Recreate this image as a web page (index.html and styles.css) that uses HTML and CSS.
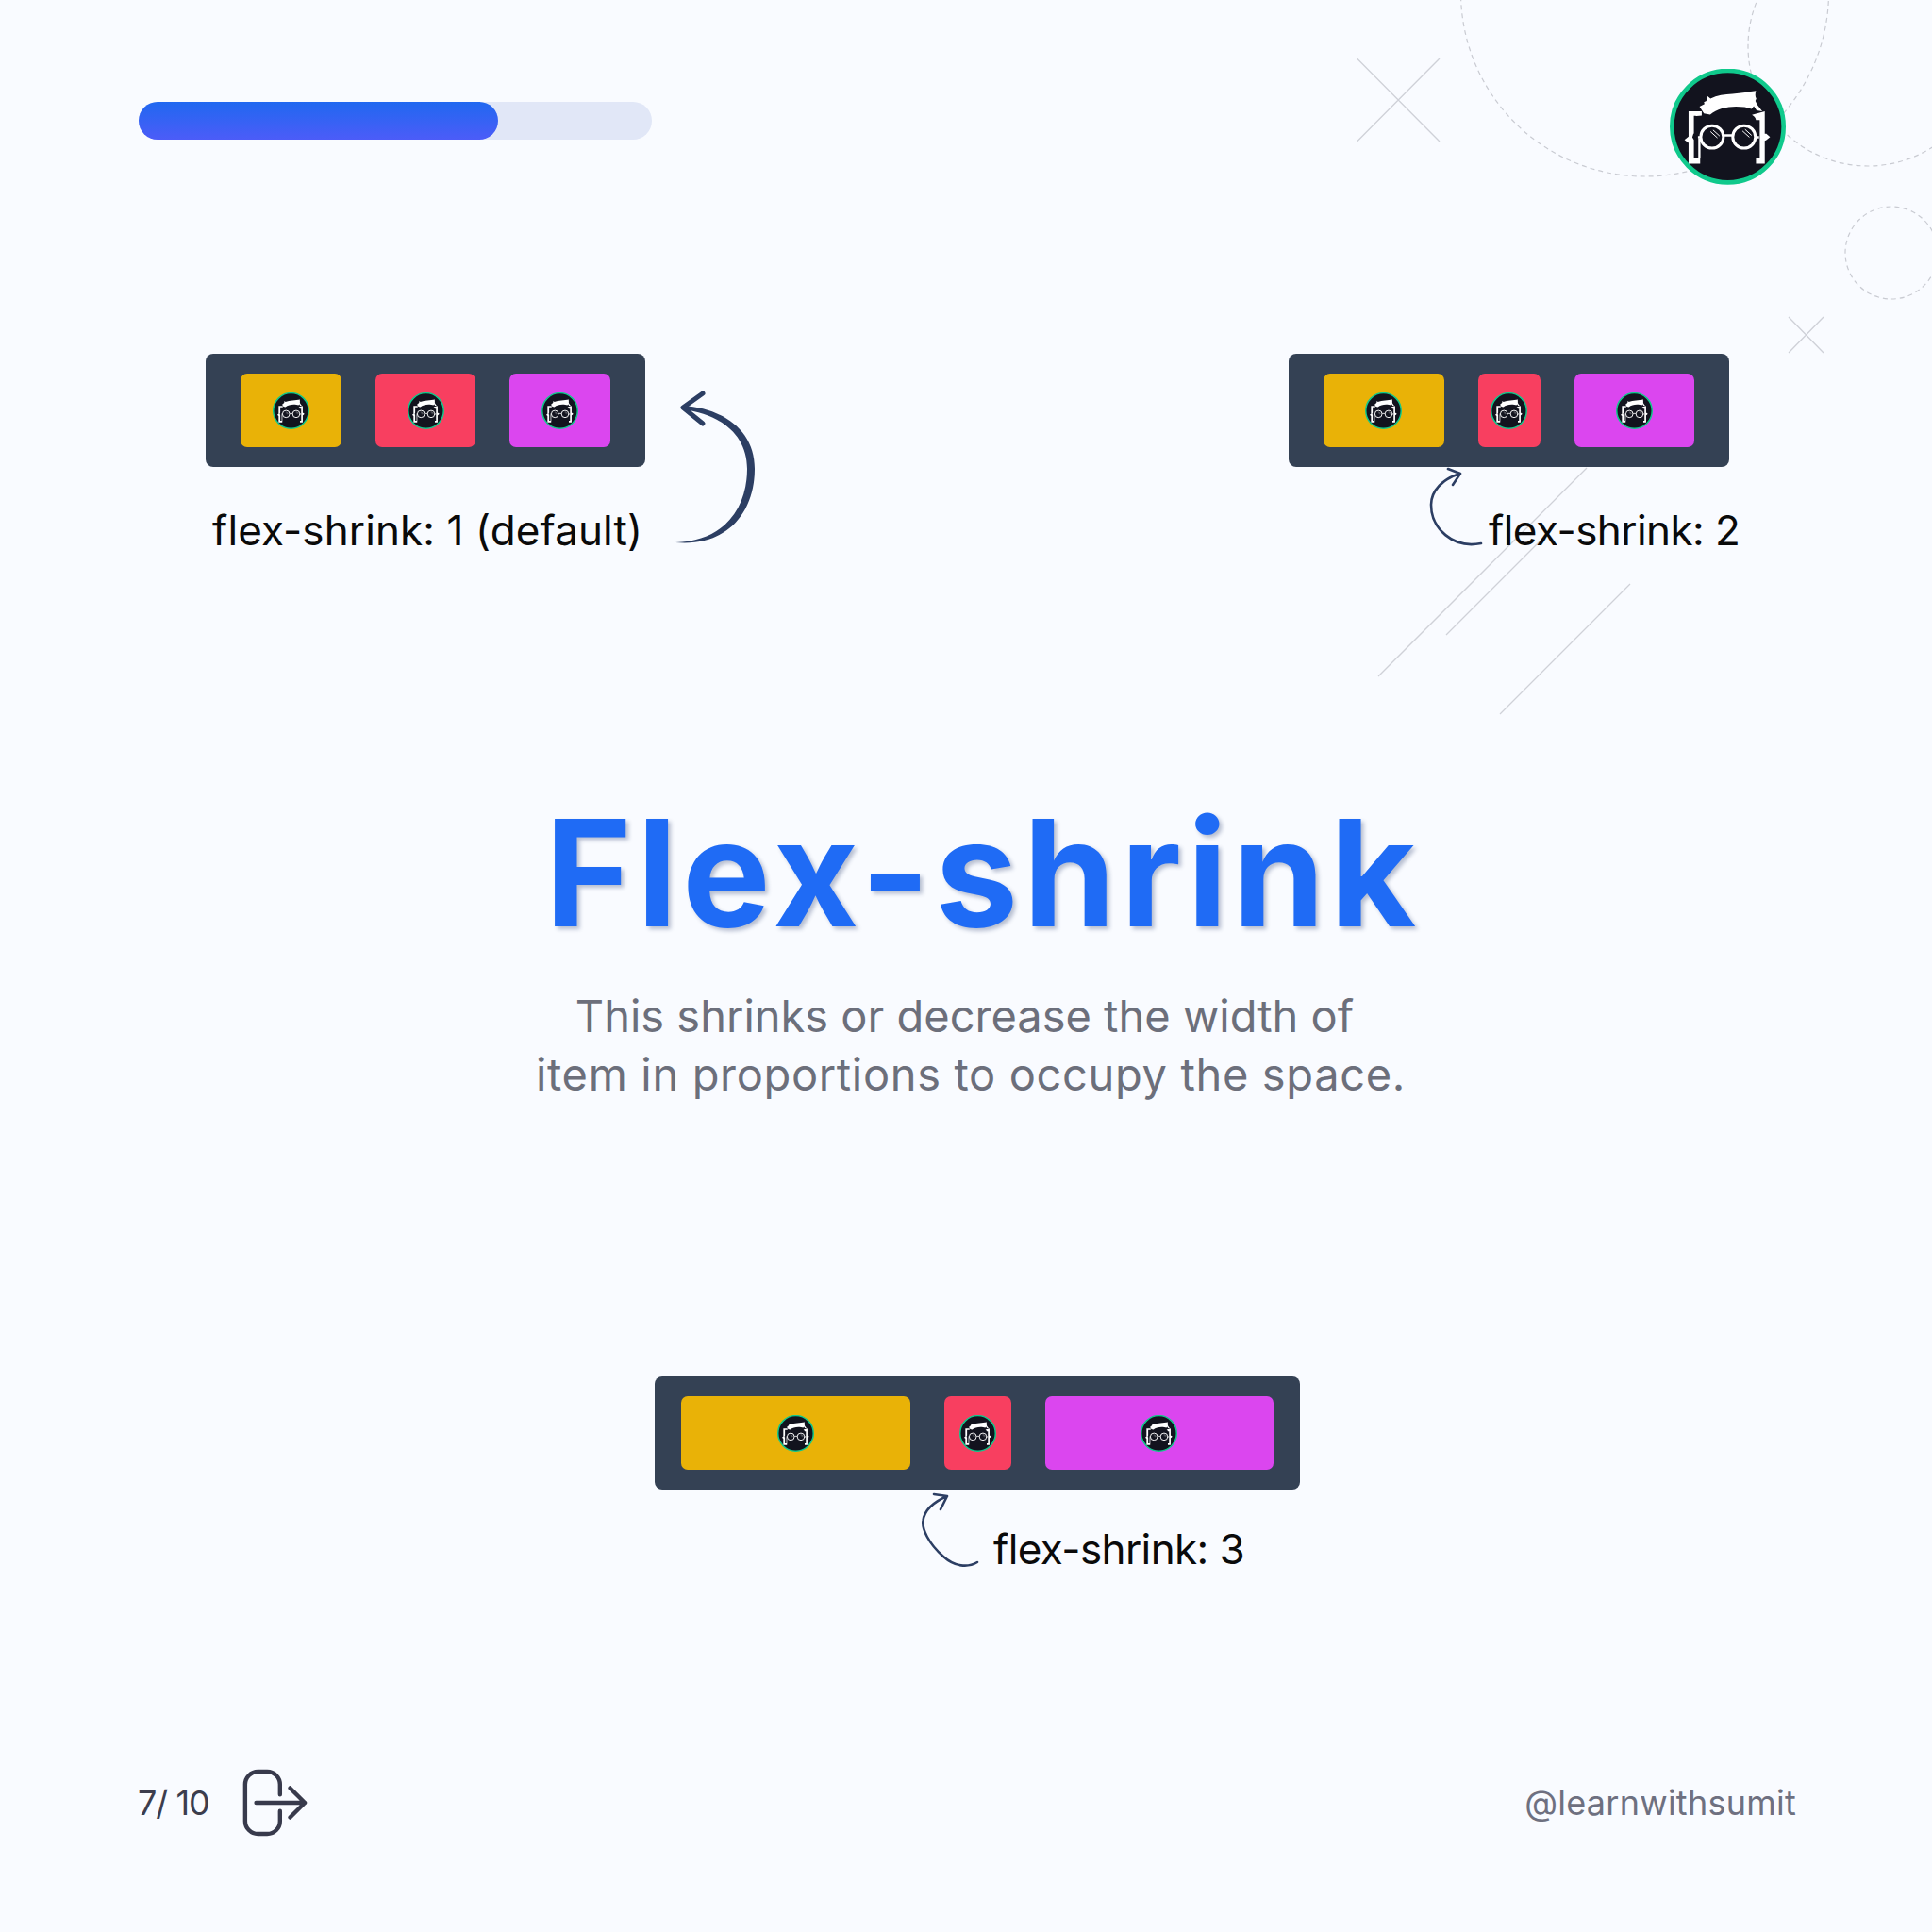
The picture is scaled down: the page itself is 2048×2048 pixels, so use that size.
FILE: index.html
```html
<!DOCTYPE html>
<html lang="en">
<head>
<meta charset="utf-8">
<title>Flex-shrink</title>
<link rel="stylesheet" href="styles.css">
</head>
<body>
<svg width="0" height="0" class="defs">
  <symbol id="logo" viewBox="90 40 370 370">
    <circle cx="275" cy="224" r="178" fill="#12131e" stroke="#10c98c" stroke-width="14"/>
    <path fill="#fff" d="M185 160l16-8-2-6 8-4 1-17 12 10c20-10 46-14 70-15 28-2 54-8 75-10-3 10-3 18 1 25l-3 7 6 12 16 21-18-3-9-13-7 9c-12-6-30-8-50-8-30 0-62 8-82 26l-20-4z"/>
    <path fill="#fff" d="M150 175h42v14c-8 1-15 2-25 1v55l-2 3-3 10 5 8v59h20v17h-37v-66l-13-10 13-10z"/>
    <path fill="#fff" d="M181 262h7v64h-7z"/>
    <path fill="#fff" d="M352 187l41-12v72l5 0 12 10-12 10-5 2v73h-28v-17h12V203h-12c-2-7-4-11-13-16z"/>
    <g fill="none" stroke="#fff">
      <circle cx="225" cy="257" r="36" stroke-width="9"/>
      <circle cx="327" cy="257" r="36" stroke-width="9"/>
      <path stroke-width="8" d="M262 252h28M180 258h9M363 258h12"/>
      <path stroke-width="3" d="M220 240l22 20M228 235l21 19M322 238l22 20M330 233l21 19"/>
    </g>
  </symbol>
</svg>
<main class="page">
  <svg class="canvas" width="2048" height="2048" viewBox="0 0 2048 2048">
    <g class="deco-dash">
      <circle cx="1743.5" cy="-8" r="195"/>
      <circle cx="1980" cy="49" r="127"/>
      <circle cx="2005" cy="268" r="49"/>
    </g>
    <g class="deco-line">
      <path d="M1438.500 62 1526 150M1526 62 1438.500 150"/>
      <path d="M1896 336 1933 374M1933 336 1896 374"/>
      <path d="M1461 717 1682 496"/>
      <path d="M1533 673 1640 566"/>
      <path d="M1590 757 1728 619"/>
    </g>
    <path class="arrow-fill" d="M716 575C772 580 800 542 800 497C800 456 767 433 724 430L724 434C763 439 792 460 792 497C792 538 768 574 716 575Z"/>
    <g class="arrow">
      <path class="thick" d="M745 417 724 432 745 449"/>
      <path d="M1570 576C1540 582 1517 560 1517 535C1517 520 1530 507 1548 502M1535 497 1548 502 1540 514"/>
      <path d="M1036 1656C1026 1662 1012 1661 1000 1650C984 1636 977 1620 978.500 1612C980 1600 990 1592 1004 1586M990 1584 1004 1586 997 1600"/>
    </g>
  </svg>

  <header class="top">
    <div class="progress"><div class="progress-fill"></div></div>
    <svg class="logo-big"><use href="#logo"/></svg>
  </header>

  <section class="demos">
    <div class="demo">
      <div class="box">
        <div class="item yellow"><svg class="logo-small"><use href="#logo"/></svg></div>
        <div class="item red"><svg class="logo-small"><use href="#logo"/></svg></div>
        <div class="item magenta"><svg class="logo-small"><use href="#logo"/></svg></div>
      </div>
      <p class="label label-one">flex-shrink: 1 (default)</p>
    </div>
    <div class="demo demo-two">
      <div class="box">
        <div class="item yellow"><svg class="logo-small"><use href="#logo"/></svg></div>
        <div class="item red narrow-two"><svg class="logo-small"><use href="#logo"/></svg></div>
        <div class="item magenta"><svg class="logo-small"><use href="#logo"/></svg></div>
      </div>
      <p class="label label-two">flex-shrink: 2</p>
    </div>
  </section>

  <section class="hero">
    <h1 class="title">Flex-shrink</h1>
    <p class="sub sub-first">This shrinks or decrease the width of</p>
    <p class="sub sub-second">item in proportions to occupy the space.</p>
  </section>

  <section class="demo demo-three">
    <div class="box box-wide">
      <div class="item yellow"><svg class="logo-small"><use href="#logo"/></svg></div>
      <div class="item red narrow-three"><svg class="logo-small"><use href="#logo"/></svg></div>
      <div class="item magenta"><svg class="logo-small"><use href="#logo"/></svg></div>
    </div>
    <p class="label label-three">flex-shrink: 3</p>
  </section>

  <footer class="foot">
    <div class="pager">
      <span class="count">7/ 10</span>
      <svg class="next" width="70" height="76" viewBox="255 1873 72 76">
        <path d="M297 1902V1891a14 14 0 0 0-14-14H273a14 14 0 0 0-14 14V1931a14 14 0 0 0 14 14H283a14 14 0 0 0 14-14V1920M271 1911H324M308 1895 324 1911 308 1927"/>
      </svg>
    </div>
    <span class="handle">@learnwithsumit</span>
  </footer>
</main>
</body>
</html>
```
FILE: styles.css
```css
* { box-sizing: border-box; }
html, body { margin: 0; padding: 0; }
body { background: #f9fbff; font-family: Inter, "Noto Sans", sans-serif; }
.defs { position: absolute; }
.page { position: relative; width: 2048px; height: 2048px; overflow: hidden; display: flex; flex-direction: column; background: #f9fbff; }
.canvas { position: absolute; left: 0; top: 0; }
.deco-dash { fill: none; stroke: #c9cbd2; stroke-width: 1.2; stroke-dasharray: 5 4; }
.deco-line { fill: none; stroke: #cfd1d8; stroke-width: 1.3; }
.arrow-fill { fill: #2c3e63; }
.arrow { fill: none; stroke: #2c3e63; stroke-width: 2.6; stroke-linecap: round; stroke-linejoin: round; }
.arrow .thick { stroke-width: 5; }

.top { position: relative; display: flex; justify-content: space-between; align-items: flex-start; padding: 73px 155px 0 147px; height: 196px; }
.progress { width: 544px; height: 40px; margin-top: 35px; border-radius: 20px; background: #e1e7f7; }
.progress-fill { width: 381px; height: 40px; border-radius: 20px; background: linear-gradient(180deg, #2068f0, #4c5cf8); }
.logo-big { width: 123px; height: 123px; }

.demos { position: relative; display: flex; justify-content: space-between; padding: 0 215px 0 218px; margin-top: 179px; }
.demo { position: relative; }
.demo-two { width: 467px; }
.box { display: flex; gap: 36px; width: 466px; height: 120px; padding: 21px 37px; border-radius: 8px; background: #344154; }
.demo-two .box { width: 467px; }
.box-wide { width: 684px; padding: 21px 28px; }
.item { flex: 1 1 0; display: flex; align-items: center; justify-content: center; border-radius: 7px; }
.yellow { background: #e9b207; }
.red { background: #f83f60; }
.magenta { background: #db46ef; }
.narrow-two { flex: 0 0 66px; }
.narrow-three { flex: 0 0 71px; }
.logo-small { width: 39px; height: 39px; }

.label { margin: 37px 0 0; font-size: 44px; line-height: 60px; font-weight: 400; color: #0a0a0a; white-space: nowrap; }
.label-one { margin-left: 7px; letter-spacing: .1px; }
.label-two { margin-left: 212px; letter-spacing: -.55px; }
.label-three { margin: 33px 0 0 359px; letter-spacing: -.6px; }

.hero { position: relative; margin-top: 248px; display: flex; flex-direction: column; align-items: center; padding-left: 10px; }
.title { margin: 0; padding-left: 26px; font-size: 157px; line-height: 170px; font-weight: 700; letter-spacing: 5.500px; color: #1f6bf5; text-shadow: 3px 3px 4px rgba(30, 50, 100, .3); }
.sub { margin: 0; font-size: 47px; line-height: 61.500px; color: #6c6f7b; }
.sub-first { margin-top: 36px; padding-right: 13px; }
.sub-second { letter-spacing: .65px; }

.demo-three { margin: 290px 0 0 694px; }

.foot { position: absolute; left: 146px; right: 144px; top: 1873px; display: flex; justify-content: space-between; align-items: center; }
.pager { display: flex; align-items: center; gap: 34px; }
.count { font-size: 36px; letter-spacing: -1px; color: #3c3d4d; }
.next { fill: none; stroke: #383a4c; stroke-width: 4.500; stroke-linecap: round; stroke-linejoin: round; }
.handle { font-size: 36px; letter-spacing: .25px; color: #6e7080; }
```
